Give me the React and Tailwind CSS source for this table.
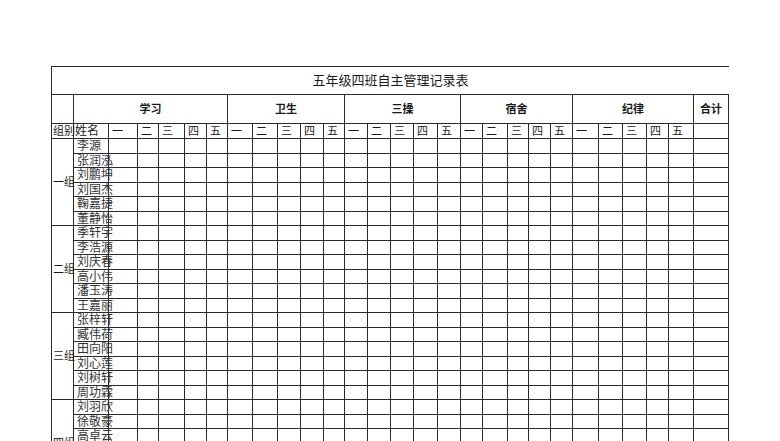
const groups = [
  { label: '一组', names: ['李源', '张润泓', '刘鹏坤', '刘国杰', '鞠嘉捷', '董静怡'] },
  { label: '二组', names: ['季轩宇', '李浩源', '刘庆春', '高小伟', '潘玉涛', '王嘉丽'] },
  { label: '三组', names: ['张梓轩', '臧伟荷', '田向阳', '刘心莲', '刘树轩', '周功霖'] },
  { label: '四组', names: ['刘羽欣', '徐敬豪', '高卓云', '', '', ''] },
]

const categories = ['卫生', '三操', '宿舍', '纪律']
const days = ['一', '二', '三', '四', '五']

const cell = 'border-r border-b border-[#2a2a2a]'

export default function App() {
  return (
    <div
      className="h-[441px] w-[780px] overflow-hidden bg-white pl-[51px] pt-[66px] text-[#1a1a1a]"
      style={{ fontFamily: '"Liberation Serif", "Noto Sans CJK SC", serif' }}
    >
      <div className="grid w-[678px] grid-cols-[22px_35px_29px_21px_26px_22px_21px_25px_25px_23px_23px_21px_23px_23px_23px_24px_23px_22px_25px_21px_22px_22px_26px_24px_24px_22px_25px_35px] grid-rows-[28px_29px_15px_repeat(12,15px_14px)] border-l border-t border-[#2a2a2a]">
        {/* Title */}
        <div className="col-span-28 flex items-center justify-center border-b border-[#2a2a2a] text-[13px]">
          五年级四班自主管理记录表
        </div>

        {/* Category row */}
        <div className={cell}></div>
        <div className={`${cell} col-span-6 flex items-center justify-center text-[11px] font-semibold`}>学习</div>
        {categories.map((c) => (
          <div key={c} className={`${cell} col-span-5 flex items-center justify-center text-[11px] font-semibold`}>
            {c}
          </div>
        ))}
        <div className={`${cell} flex items-center justify-center text-[11px] font-semibold`}>合计</div>

        {/* Sub header */}
        <div className={`${cell} flex items-center whitespace-nowrap pl-px text-[11px] leading-none`}>组别</div>
        <div className={`${cell} flex items-center pl-px text-[12px] leading-none`}>姓名</div>
        {[0, 1, 2, 3, 4].map((g) =>
          days.map((d) => (
            <div key={`${g}-${d}`} className={`${cell} flex items-center pl-[3px] text-[11px] leading-none`}>
              {d}
            </div>
          ))
        )}
        <div className={cell}></div>

        {/* Data rows */}
        {groups.map((g) => (
          <GroupRows key={g.label} group={g} />
        ))}
      </div>
    </div>
  )
}

function GroupRows({ group }) {
  return (
    <>
      <div className={`${cell} col-start-1 row-span-6 flex items-center whitespace-nowrap pl-px text-[11px]`}>
        {group.label}
      </div>
      {group.names.map((name, i) => (
        <Row key={i} name={name} />
      ))}
    </>
  )
}

function Row({ name }) {
  return (
    <>
      <div className={`${cell} col-start-2 flex items-center whitespace-nowrap pl-[3px] text-[12px] leading-none text-[#333]`}>
        {name}
      </div>
      {Array.from({ length: 26 }).map((_, j) => (
        <div key={j} className={cell}></div>
      ))}
    </>
  )
}
